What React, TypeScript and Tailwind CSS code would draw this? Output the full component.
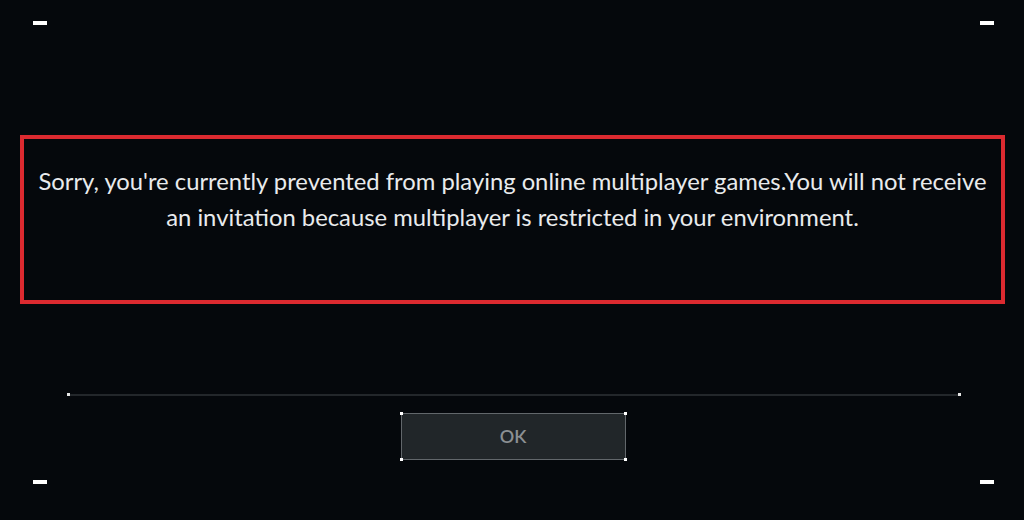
import React from "react";

function Corner() {
    return <div className="w-[14px] h-[4px] bg-white" />;
}

function Dot() {
    return <div className="w-[3px] h-[3px] bg-[#e6e6e6]" />;
}

export default function App() {
    return (
        <div className="w-[1024px] h-[520px] bg-[#05080c] flex flex-col font-['Lato','Noto_Sans',sans-serif] overflow-hidden">
            <div className="flex justify-between pl-[33px] pr-[30px] pt-[21px]">
                <Corner />
                <Corner />
            </div>

            <div className="mt-[110px] mx-[20px] w-[985px] h-[169px] border-[4px] border-[#dc2a30] flex flex-col items-center pt-[24px]">
                <p className="text-[#e9ebec] text-[23.8px] leading-[36px] text-center">
                    Sorry, you're currently prevented from playing online multiplayer games.You will not receive
                    <br />
                    an invitation because multiplayer is restricted in your environment.
                </p>
            </div>

            <div className="mt-[89px] ml-[67px] mr-[63px] flex items-center">
                <Dot />
                <div className="flex-1 h-[2px] bg-[#23272b]" />
                <Dot />
            </div>

            <div className="mt-[17px] flex justify-center">
                <div className="relative ml-[2px] w-[225px] h-[47px] bg-[#212629] border border-[#62676b] flex items-center justify-center">
                    <span className="text-[#8c9093] text-[18px] font-semibold">OK</span>
                    <div className="absolute -top-[2px] -left-[2px] w-[3px] h-[3px] bg-white" />
                    <div className="absolute -top-[2px] -right-[2px] w-[3px] h-[3px] bg-white" />
                    <div className="absolute -bottom-[2px] -left-[2px] w-[3px] h-[3px] bg-white" />
                    <div className="absolute -bottom-[2px] -right-[2px] w-[3px] h-[3px] bg-white" />
                </div>
            </div>

            <div className="mt-[20px] flex justify-between pl-[33px] pr-[30px]">
                <Corner />
                <Corner />
            </div>
        </div>
    );
}
